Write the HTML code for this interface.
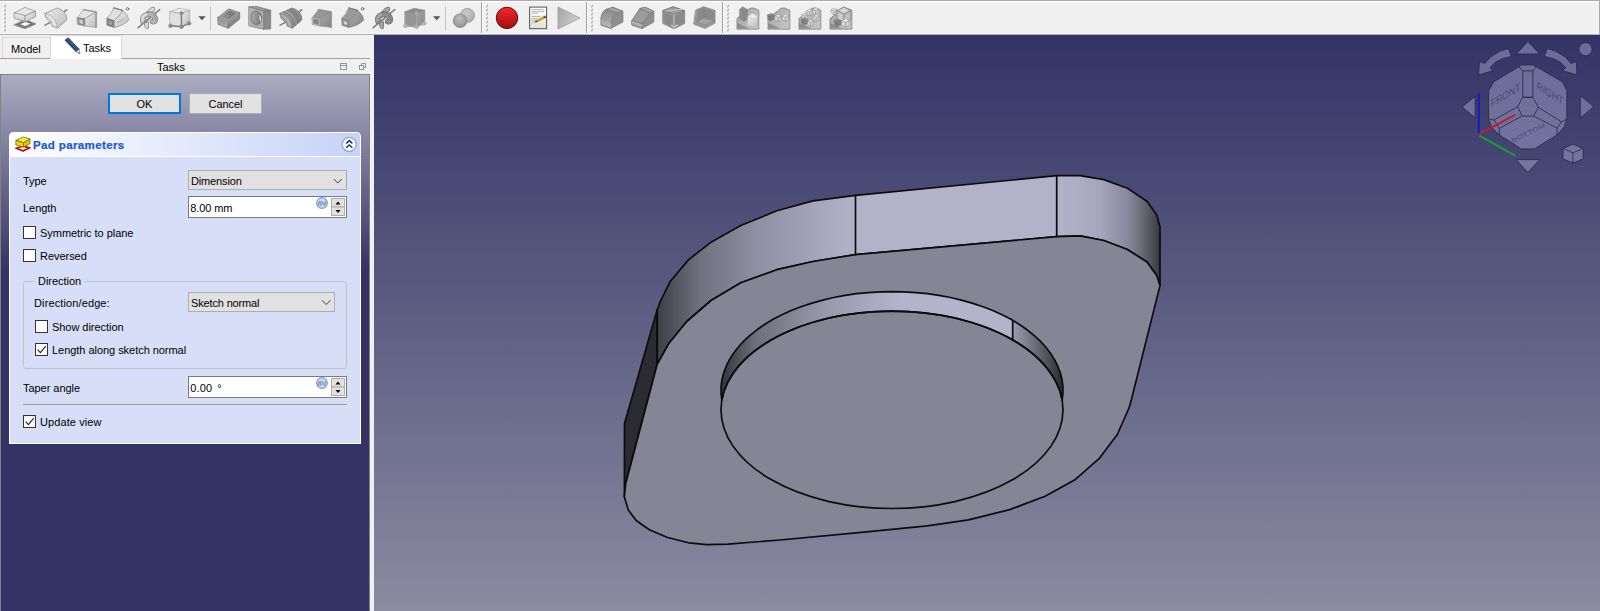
<!DOCTYPE html>
<html>
<head>
<meta charset="utf-8">
<title>FreeCAD</title>
<style>
*{box-sizing:border-box;margin:0;padding:0}
html,body{width:1600px;height:611px;overflow:hidden;background:#f0f0f0}
body{font-family:"Liberation Sans",sans-serif;font-size:11px;color:#000;letter-spacing:-0.04px;position:relative}
.abs{position:absolute}
#topline{left:0;top:0;width:1600px;height:2px;background:linear-gradient(#ababab 0,#ababab 1px,#fff 1px,#fff 2px)}
#toolbar{left:0;top:1px;width:1600px;height:33px;background:#f0f0f0}
#tbline{left:0;top:33px;width:1600px;height:2px;background:linear-gradient(#f8f8f8 0,#f8f8f8 1px,#b0b0b0 1px,#b0b0b0 2px)}
#view{left:374px;top:35px;width:1226px;height:576px;background:linear-gradient(#333366 0%,#8b8ba2 100%)}
#panel{left:0;top:74px;width:370px;height:760px;border:1px solid #828282;border-top:1px solid #828282;background:linear-gradient(#ababc1 0px,#333365 196px,#333365 100%)}
.t{position:absolute;white-space:nowrap;line-height:14px;height:14px}
.btn{position:absolute;background:#e1e1e1;border:1px solid #adadad;text-align:center;line-height:21px}
.cb{position:absolute;width:13px;height:13px;background:#fff;border:1px solid #333}
.combo{position:absolute;background:#e1e1e1;border:1px solid #adadad;height:20px;line-height:20px;padding-left:2px;letter-spacing:-0.15px}
.spin{position:absolute;background:#fff;border:1px solid #7a7a7a;height:22px;line-height:22px;padding-left:1.3px;letter-spacing:-0.1px}
</style>
</head>
<body>
<div class="abs" id="toolbar"></div>
<svg class="abs" style="left:0;top:0" width="1600" height="35" viewBox="0 0 1600 35">
<defs>
<linearGradient id="lg1" x1="0" y1="0" x2="0" y2="1"><stop offset="0" stop-color="#f2f2f2"/><stop offset="1" stop-color="#c4c4c4"/></linearGradient>
<linearGradient id="lg2" x1="0" y1="0" x2="1" y2="1"><stop offset="0" stop-color="#ececec"/><stop offset="1" stop-color="#bdbdbd"/></linearGradient>
<linearGradient id="dg1" x1="0" y1="0" x2="0" y2="1"><stop offset="0" stop-color="#8a8a8a"/><stop offset="1" stop-color="#b4b4b4"/></linearGradient>
<linearGradient id="dg2" x1="0" y1="0" x2="1" y2="1"><stop offset="0" stop-color="#a8a8a8"/><stop offset="1" stop-color="#868686"/></linearGradient>
<linearGradient id="red" x1="0" y1="0" x2="0" y2="1"><stop offset="0" stop-color="#f4282e"/><stop offset="1" stop-color="#a80c0c"/></linearGradient>
<linearGradient id="doc" x1="0" y1="0" x2="0" y2="1"><stop offset="0" stop-color="#ffffff"/><stop offset="1" stop-color="#dfe1d4"/></linearGradient>
<linearGradient id="play" x1="0" y1="0" x2="1" y2="0.4"><stop offset="0" stop-color="#a4a4a4"/><stop offset="1" stop-color="#cfcfcf"/></linearGradient>
<linearGradient id="dg2h" x1="0" y1="0" x2="1" y2="0.3"><stop offset="0" stop-color="#b0b0b0"/><stop offset="1" stop-color="#7c7c7c"/></linearGradient>
<linearGradient id="bs" x1="0" y1="0" x2="1" y2="0.6"><stop offset="0" stop-color="#a4a4a4"/><stop offset="1" stop-color="#c2c2c2"/></linearGradient>
<radialGradient id="sph" cx="0.45" cy="0.35" r="0.7"><stop offset="0" stop-color="#bdbdbd"/><stop offset="1" stop-color="#8e8e8e"/></radialGradient>
<radialGradient id="sph2" cx="0.45" cy="0.35" r="0.7"><stop offset="0" stop-color="#cccccc"/><stop offset="1" stop-color="#a6a6a6"/></radialGradient>

</defs>
<g transform="translate(4,5.5)"><path d="M-1 -0.6h1.6v1.6h-1.6zM-1 3.4h1.6v1.6h-1.6zM-1 7.4h1.6v1.6h-1.6zM-1 11.4h1.6v1.6h-1.6zM-1 15.4h1.6v1.6h-1.6zM-1 19.4h1.6v1.6h-1.6zM-1 23.4h1.6v1.6h-1.6z" fill="#ffffff"/><path d="M0 0.2h1.5v1.5h-1.5zM1 -0.7h1v1h-1zM0 4.2h1.5v1.5h-1.5zM1 3.3h1v1h-1zM0 8.2h1.5v1.5h-1.5zM1 7.3h1v1h-1zM0 12.2h1.5v1.5h-1.5zM1 11.3h1v1h-1zM0 16.2h1.5v1.5h-1.5zM1 15.3h1v1h-1zM0 20.2h1.5v1.5h-1.5zM1 19.3h1v1h-1zM0 24.2h1.5v1.5h-1.5zM1 23.3h1v1h-1z" fill="#a6a6a6"/></g>
<g transform="translate(486,5.5)"><path d="M-1 -0.6h1.6v1.6h-1.6zM-1 3.4h1.6v1.6h-1.6zM-1 7.4h1.6v1.6h-1.6zM-1 11.4h1.6v1.6h-1.6zM-1 15.4h1.6v1.6h-1.6zM-1 19.4h1.6v1.6h-1.6zM-1 23.4h1.6v1.6h-1.6z" fill="#ffffff"/><path d="M0 0.2h1.5v1.5h-1.5zM1 -0.7h1v1h-1zM0 4.2h1.5v1.5h-1.5zM1 3.3h1v1h-1zM0 8.2h1.5v1.5h-1.5zM1 7.3h1v1h-1zM0 12.2h1.5v1.5h-1.5zM1 11.3h1v1h-1zM0 16.2h1.5v1.5h-1.5zM1 15.3h1v1h-1zM0 20.2h1.5v1.5h-1.5zM1 19.3h1v1h-1zM0 24.2h1.5v1.5h-1.5zM1 23.3h1v1h-1z" fill="#a6a6a6"/></g>
<g transform="translate(591,5.5)"><path d="M-1 -0.6h1.6v1.6h-1.6zM-1 3.4h1.6v1.6h-1.6zM-1 7.4h1.6v1.6h-1.6zM-1 11.4h1.6v1.6h-1.6zM-1 15.4h1.6v1.6h-1.6zM-1 19.4h1.6v1.6h-1.6zM-1 23.4h1.6v1.6h-1.6z" fill="#ffffff"/><path d="M0 0.2h1.5v1.5h-1.5zM1 -0.7h1v1h-1zM0 4.2h1.5v1.5h-1.5zM1 3.3h1v1h-1zM0 8.2h1.5v1.5h-1.5zM1 7.3h1v1h-1zM0 12.2h1.5v1.5h-1.5zM1 11.3h1v1h-1zM0 16.2h1.5v1.5h-1.5zM1 15.3h1v1h-1zM0 20.2h1.5v1.5h-1.5zM1 19.3h1v1h-1zM0 24.2h1.5v1.5h-1.5zM1 23.3h1v1h-1z" fill="#a6a6a6"/></g>
<g transform="translate(727,5.5)"><path d="M-1 -0.6h1.6v1.6h-1.6zM-1 3.4h1.6v1.6h-1.6zM-1 7.4h1.6v1.6h-1.6zM-1 11.4h1.6v1.6h-1.6zM-1 15.4h1.6v1.6h-1.6zM-1 19.4h1.6v1.6h-1.6zM-1 23.4h1.6v1.6h-1.6z" fill="#ffffff"/><path d="M0 0.2h1.5v1.5h-1.5zM1 -0.7h1v1h-1zM0 4.2h1.5v1.5h-1.5zM1 3.3h1v1h-1zM0 8.2h1.5v1.5h-1.5zM1 7.3h1v1h-1zM0 12.2h1.5v1.5h-1.5zM1 11.3h1v1h-1zM0 16.2h1.5v1.5h-1.5zM1 15.3h1v1h-1zM0 20.2h1.5v1.5h-1.5zM1 19.3h1v1h-1zM0 24.2h1.5v1.5h-1.5zM1 23.3h1v1h-1z" fill="#a6a6a6"/></g>
<path d="M481.5 1V34" stroke="#a0a0a0" stroke-width="1"/><path d="M482.5 1V34" stroke="#ffffff" stroke-width="1"/>
<path d="M586.5 1V34" stroke="#a0a0a0" stroke-width="1"/><path d="M587.5 1V34" stroke="#ffffff" stroke-width="1"/>
<path d="M722.5 1V34" stroke="#a0a0a0" stroke-width="1"/><path d="M723.5 1V34" stroke="#ffffff" stroke-width="1"/>
<path d="M210.5 6.5V30" stroke="#c4c4c4" stroke-width="1"/>
<path d="M445.5 6.5V30" stroke="#c4c4c4" stroke-width="1"/>
<path d="M198.3 16.3h7.4l-3.7 3.9z" fill="#55555c"/>
<path d="M433 16.3h7.4l-3.7 3.9z" fill="#55555c"/>
<g transform="translate(13,6)" stroke-linejoin="round" stroke-linecap="round"><path d="M1.1 18.9 L12.1 22.7 L23 17.9 L12.4 13.5Z" fill="#6e6e6e" stroke="#7c7c7c" stroke-width="0.6"/>
<path d="M3 18.6 L12.2 21.8 M5 17.6 L14.5 20.8 M7 16.6 L17 19.8 M19 16.2 L10 20.6 M21 17 L12 21.6" stroke="#9a9a9a" stroke-width="0.5" fill="none"/>
<path d="M7.4 18.3 L12.2 20.1 L17.4 17.7 L12.4 15.8Z" fill="#f6f6f6"/>
<path d="M1.4 6.9 L11.9 1.4 L22.5 5.2 L12.4 9.6Z" fill="#e6e6e6" stroke="#8a8a8a" stroke-width="0.7"/>
<path d="M1.4 6.9 L12.4 9.6 L12.4 15.9 L1.6 12.4Z" fill="url(#lg1)" stroke="#8a8a8a" stroke-width="0.7"/>
<path d="M12.4 9.6 L22.5 5.2 L22.5 10.7 L12.4 15.9Z" fill="url(#lg2)" stroke="#8a8a8a" stroke-width="0.7"/></g>
<g transform="translate(44,6)" stroke-linejoin="round" stroke-linecap="round"><path d="M1.1 19.1 L6.8 16.1 M20 5.9 L22.7 3.8" stroke="#808080" stroke-width="1.6" fill="none"/>
<path d="M1.1 7.4 L13.4 2 Q18.5 3.5 21.2 7.4 Q23.2 11 22.7 14 L13.4 22.1 L8 19.7 Q8.2 17.5 7.1 16.7 L3.5 13.7 Q2 12.5 2 11Z" fill="url(#lg2)" stroke="#8e8e8e" stroke-width="0.8"/>
<path d="M1.1 7.4 Q9 9.5 11.5 15 Q13 18.5 13.4 22.1 L8 19.7 Q8.2 17.5 7.1 16.7 L3.5 13.7 Q2 12.5 2 11Z" fill="#e6e6e6" stroke="#8e8e8e" stroke-width="0.6"/>
<path d="M2 11 Q6.5 12 8 16.8" stroke="#8e8e8e" stroke-width="0.5" fill="none"/></g>
<g transform="translate(75,6)" stroke-linejoin="round" stroke-linecap="round"><path d="M8.5 3.3 L21.6 5.7 L21.6 21.5 L20.4 21.8 L20.4 6.6 L8.2 4.4Z" fill="#8c8c8c" stroke="#8e8e8e" stroke-width="0.6"/>
<path d="M2.3 11.5 L8.5 3.9 L20.6 6.2 L9.9 12.6Z" fill="#e4e4e4" stroke="#8e8e8e" stroke-width="0.6"/>
<path d="M9.9 12.6 L20.6 6.2 L20.6 21.3 L9.9 20.1Z" fill="url(#lg2)" stroke="#8e8e8e" stroke-width="0.6"/>
<path d="M2.3 11.5 L9.9 12.6 L9.9 20.1 L2.7 18.4Z" fill="#8c8c8c" stroke="#8e8e8e" stroke-width="0.6"/>
<path d="M4.3 13.6 L7.9 14.2 L7.9 17.9 L4.5 17.2Z" fill="#d0d0d0"/></g>
<g transform="translate(106,6)" stroke-linejoin="round" stroke-linecap="round"><path d="M8.1 14.6 Q14 10 16.7 4.3 Q22 8.5 22.9 13.9 Q17 20 8.1 21.5Z" fill="url(#lg2)" stroke="#868686" stroke-width="0.6"/>
<path d="M0.9 12.2 Q5.5 8 7.7 1.9 L16.7 4.3 Q14 10 8.1 14.6Z" fill="#e0e0e0" stroke="#868686" stroke-width="0.6"/>
<path d="M7.7 1.9 L16.7 4.3" stroke="#808080" stroke-width="1.2" fill="none"/>
<path d="M0.9 12.2 L8.1 14.6 L8.1 21.5 L1.2 19.4Z" fill="#808080" stroke="#868686" stroke-width="0.6"/>
<path d="M2.6 14.8 L6.2 16 L6.2 18.9 L2.8 17.9Z" fill="#a0a0a0"/>
<path d="M11 16.5 Q15 15.5 17.5 13" stroke="#999" stroke-width="0.8" fill="none"/>
<circle cx="21.5" cy="2.9" r="1.3" fill="none" stroke="#666" stroke-width="0.9"/></g>
<g transform="translate(137,6)" stroke-linejoin="round" stroke-linecap="round"><path d="M10.1 5.8 Q12.5 1.2 17 1 Q18.2 2.8 17.6 4.8 Q14 7.5 10.1 5.8Z" fill="#dedede" stroke="#868686" stroke-width="0.9"/>
<path d="M7.2 17.4 L8.3 21.6 Q9.6 23.4 11.2 22.6 L11.6 16.2Z" fill="#dedede" stroke="#868686" stroke-width="0.9"/>
<path d="M1.2 21.7 L22.7 3.6" stroke="#808080" stroke-width="1.6" fill="none"/>
<path d="M6 15.4 Q5 10.4 9.4 8.8 Q16.4 7 18.4 12.6 Q19 16.4 15.6 15.6" stroke="#868686" stroke-width="5.4" fill="none"/>
<path d="M6 15.4 Q5 10.4 9.4 8.8 Q16.4 7 18.4 12.6 Q19 16.4 15.6 15.6" stroke="#b4b4b4" stroke-width="3.9" fill="none"/>
<path d="M5.4 14.4 Q4.8 10.2 9 8.4" stroke="#dedede" stroke-width="2.4" fill="none"/>
<path d="M16.5 9.2 Q19.4 11 19.2 14.6" stroke="#868686" stroke-width="0.7" fill="none"/>
<path d="M7.6 16.4 L12.2 12.6" stroke="#808080" stroke-width="1.6" fill="none"/></g>
<g transform="translate(168,6)" stroke-linejoin="round" stroke-linecap="round"><path d="M2.1 5.7 L11.1 2.3 L21.7 4.3 L13.5 7.4Z" fill="#ebebeb" stroke="#9a9a9a" stroke-width="0.6"/>
<path d="M2.1 5.7 L13.5 7.4 L13.5 20.5 L2.1 19.4Z" fill="#e0e0e0" stroke="#9a9a9a" stroke-width="0.6"/>
<path d="M13.5 7.4 L21.7 4.3 L21.7 17.4 L13.5 20.5Z" fill="url(#lg2)" stroke="#9a9a9a" stroke-width="0.6"/>
<path d="M13.5 7.1 V20.8 M2.5 19.8 L13.5 20.8 L21 17.4" stroke="#808080" stroke-width="1.4" fill="none"/>
<g stroke="#808080" stroke-width="0.5"><circle cx="13.5" cy="7.1" r="1.7" fill="#8c8c8c"/><circle cx="2.5" cy="19.8" r="1.9" fill="#8c8c8c"/><circle cx="13.5" cy="20.8" r="1.9" fill="#8c8c8c"/><circle cx="21" cy="17.4" r="1.9" fill="#8c8c8c"/></g></g>
<g transform="translate(217,6)" stroke-linejoin="round" stroke-linecap="round"><path d="M1.1 11.5 L11.7 2.9 L22.7 6.7 L11.4 16.3Z" fill="#9e9e9e" stroke="#727272" stroke-width="0.8"/>
<path d="M1.1 11.5 L11.4 16.3 L11.4 22.2 L1.4 18.4Z" fill="url(#dg1)" stroke="#727272" stroke-width="0.8"/>
<path d="M11.4 16.3 L22.7 6.7 L22.7 12.9 L11.4 22.2Z" fill="#8a8a8a" stroke="#727272" stroke-width="0.8"/>
<path d="M2.2 12.2 L11.3 16.9 L22 7.6" stroke="#c2c2c2" stroke-width="0.6" fill="none"/>
<path d="M6.6 10.2 L12.4 5.3 L17.9 7.4 L12.1 12.2Z" fill="#7e7e7e" stroke="#6a6a6a" stroke-width="0.7"/>
<path d="M9.6 7.8 L12.6 9 L12.1 12.2 M12.6 9 L17.9 7.4" stroke="#6a6a6a" stroke-width="0.5" fill="none"/>
<path d="M6.6 10.2 L9.6 7.8 L12.6 9 L12.1 12.2Z" fill="#909090"/></g>
<g transform="translate(248,6)" stroke-linejoin="round" stroke-linecap="round"><path d="M1.2 0.9 L8.2 0.3 L22.7 4.3 L15.7 5.3Z" fill="#9c9c9c" stroke="#727272" stroke-width="0.7"/>
<path d="M15.7 5.3 L22.7 4.3 L22.7 22.9 L15.7 23.2Z" fill="#8a8a8a" stroke="#727272" stroke-width="0.7"/>
<path d="M1.2 0.9 L15.7 5.3 L15.7 23.2 L1.2 19.8Z" fill="#adadad" stroke="#727272" stroke-width="0.8"/>
<path d="M2.2 2.2 L14.7 6 L14.7 21.9 L2.2 19Z" fill="none" stroke="#c6c6c6" stroke-width="0.5"/>
<ellipse cx="8.4" cy="11.8" rx="5.4" ry="6.8" fill="url(#dg2h)" stroke="#6e6e6e" stroke-width="0.8" transform="rotate(-5 8.4 11.8)"/>
<path d="M11.4 8.3 Q13.8 11.5 12.6 16.2 Q11.2 12.2 11.4 8.3Z" fill="#fcfcfc"/></g>
<g transform="translate(279,6)" stroke-linejoin="round" stroke-linecap="round"><path d="M1.1 19.1 L6.8 16.1 M20 5.9 L22.7 3.8" stroke="#808080" stroke-width="1.6" fill="none"/>
<path d="M1.1 7.4 L13.4 2 Q18.5 3.5 21.2 7.4 Q23.2 11 22.7 14 L13.4 22.1 L8 19.7 Q8.2 17.5 7.1 16.7 L3.5 13.7 Q2 12.5 2 11Z" fill="url(#dg2)" stroke="#727272" stroke-width="0.8"/>
<path d="M1.1 7.4 Q9 9.5 11.5 15 Q13 18.5 13.4 22.1 L8 19.7 Q8.2 17.5 7.1 16.7 L3.5 13.7 Q2 12.5 2 11Z" fill="#b2b2b2" stroke="#727272" stroke-width="0.6"/>
<path d="M2 11 Q6.5 12 8 16.8" stroke="#727272" stroke-width="0.5" fill="none"/><path d="M5 5.8 Q13.5 9.5 16 19.8 M8.6 4.2 Q17 8 19 17.2" stroke="#7a7a7a" stroke-width="0.9" fill="none"/><path d="M12.5 2.6 Q20 6.5 21.6 15 L19.4 16.9 Q18 8.5 10 3.6Z" fill="#868686" stroke="#727272" stroke-width="0.5"/></g>
<g transform="translate(310,6)" stroke-linejoin="round" stroke-linecap="round"><path d="M8.5 3.3 L21.6 5.7 L21.6 21.5 L20.4 21.8 L20.4 6.6 L8.2 4.4Z" fill="#888888" stroke="#8a8a8a" stroke-width="0.6"/>
<path d="M2.3 11.5 L8.5 3.9 L20.6 6.2 L9.9 12.6Z" fill="#969696" stroke="#8a8a8a" stroke-width="0.6"/>
<path d="M9.9 12.6 L20.6 6.2 L20.6 21.3 L9.9 20.1Z" fill="url(#dg2)" stroke="#8a8a8a" stroke-width="0.6"/>
<path d="M2.3 11.5 L9.9 12.6 L9.9 20.1 L2.7 18.4Z" fill="#888888" stroke="#8a8a8a" stroke-width="0.6"/>
<path d="M2.9 12.2 L9.3 13.2 L9.3 19.4 L3.2 18Z" fill="none" stroke="#c4c4c4" stroke-width="0.8"/><path d="M4.3 13.6 L7.9 14.2 L7.9 17.9 L4.5 17.2Z" fill="#868686"/></g>
<g transform="translate(341,6)" stroke-linejoin="round" stroke-linecap="round"><path d="M8.1 14.6 Q14 10 16.7 4.3 Q22 8.5 22.9 13.9 Q17 20 8.1 21.5Z" fill="url(#dg2)" stroke="#858585" stroke-width="0.6"/>
<path d="M0.9 12.2 Q5.5 8 7.7 1.9 L16.7 4.3 Q14 10 8.1 14.6Z" fill="#9a9a9a" stroke="#858585" stroke-width="0.6"/>
<path d="M7.7 1.9 L16.7 4.3" stroke="#808080" stroke-width="1.2" fill="none"/>
<path d="M0.9 12.2 L8.1 14.6 L8.1 21.5 L1.2 19.4Z" fill="#8a8a8a" stroke="#858585" stroke-width="0.6"/>
<path d="M2.6 14.8 L6.2 16 L6.2 18.9 L2.8 17.9Z" fill="#d0d0d0"/>
<path d="M11 16.5 Q15 15.5 17.5 13" stroke="#999" stroke-width="0.8" fill="none"/>
<circle cx="21.5" cy="2.9" r="1.3" fill="none" stroke="#666" stroke-width="0.9"/></g>
<g transform="translate(372,6)" stroke-linejoin="round" stroke-linecap="round"><path d="M10.1 5.8 Q12.5 1.2 17 1 Q18.2 2.8 17.6 4.8 Q14 7.5 10.1 5.8Z" fill="#a8a8a8" stroke="#707070" stroke-width="0.9"/>
<path d="M7.2 17.4 L8.3 21.6 Q9.6 23.4 11.2 22.6 L11.6 16.2Z" fill="#a8a8a8" stroke="#707070" stroke-width="0.9"/>
<path d="M1.2 21.7 L22.7 3.6" stroke="#808080" stroke-width="1.6" fill="none"/>
<path d="M6 15.4 Q5 10.4 9.4 8.8 Q16.4 7 18.4 12.6 Q19 16.4 15.6 15.6" stroke="#707070" stroke-width="5.4" fill="none"/>
<path d="M6 15.4 Q5 10.4 9.4 8.8 Q16.4 7 18.4 12.6 Q19 16.4 15.6 15.6" stroke="#8e8e8e" stroke-width="3.9" fill="none"/>
<path d="M5.4 14.4 Q4.8 10.2 9 8.4" stroke="#a8a8a8" stroke-width="2.4" fill="none"/>
<path d="M16.5 9.2 Q19.4 11 19.2 14.6" stroke="#707070" stroke-width="0.7" fill="none"/>
<path d="M7.6 16.4 L12.2 12.6" stroke="#808080" stroke-width="1.6" fill="none"/></g>
<g transform="translate(403,6)" stroke-linejoin="round" stroke-linecap="round"><path d="M2.1 5.7 L11.1 2.3 L21.7 4.3 L13.5 7.4Z" fill="#8c8c8c" stroke="#858585" stroke-width="0.6"/>
<path d="M2.1 5.7 L13.5 7.4 L13.5 20.5 L2.1 19.4Z" fill="#969696" stroke="#858585" stroke-width="0.6"/>
<path d="M13.5 7.4 L21.7 4.3 L21.7 17.4 L13.5 20.5Z" fill="url(#dg2)" stroke="#858585" stroke-width="0.6"/>
<path d="M13.5 7.1 V20.8 M2.5 19.8 L13.5 20.8 L21 17.4" stroke="#a0a0a0" stroke-width="1.4" fill="none"/>
<g stroke="#a0a0a0" stroke-width="0.5"><circle cx="13.5" cy="7.1" r="1.7" fill="#b4b4b4"/><circle cx="2.5" cy="19.8" r="1.9" fill="#b4b4b4"/><circle cx="13.5" cy="20.8" r="1.9" fill="#b4b4b4"/><circle cx="21" cy="17.4" r="1.9" fill="#b4b4b4"/></g></g>
<g transform="translate(452,6)" stroke-linejoin="round" stroke-linecap="round"><circle cx="15.4" cy="9.5" r="7.1" fill="url(#sph2)" stroke="#9c9c9c" stroke-width="0.8"/>
<circle cx="8.2" cy="14.7" r="7.5" fill="#e4e4e4"/>
<circle cx="8.2" cy="14.7" r="6.9" fill="url(#sph)" stroke="#8a8a8a" stroke-width="0.8"/></g>
<circle cx="507" cy="17.9" r="10.7" fill="url(#red)" stroke="#3c0808" stroke-width="0.9"/>
<g><rect x="529.6" y="7.1" width="17" height="21.6" fill="url(#doc)" stroke="#50565c" stroke-width="1"/>
<path d="M531.5 9.5h12.5M531.5 11.5h12.5M531.5 13.2h6.5M531.5 16.5h9M531.5 18.6h6M531.5 20.4h4.5M531.5 22.4h3" stroke="#a8a8a8" stroke-width="0.8" fill="none"/>
<path d="M534.9 22.2 L536.4 20.4 L544.3 16.5 L545.6 17.6 L537.6 21.7Z" fill="#e6c012" stroke="#6a5208" stroke-width="0.5"/>
<path d="M543.6 16.8 L545 16 L546 17.2 L544.9 18Z" fill="#d02222" stroke="#701010" stroke-width="0.4"/>
<path d="M534.9 22.2 L536.4 20.4 L537.6 21.7Z" fill="#3a2a10"/></g>
<path d="M558 7 L558 28.9 L580 18Z" fill="url(#play)" stroke="#9c9c9c" stroke-width="0.8" stroke-linejoin="round"/>
<g transform="translate(600,6)" stroke-linejoin="round" stroke-linecap="round"><path d="M1.1 18.8 L1.1 11.8 Q2 5.5 6.3 3.4 L12.8 1.3 L22.9 5.3 L22.9 16 L11.4 22.1Z" fill="#8e8e8e" stroke="#727272" stroke-width="0.7"/>
<path d="M1.1 18.8 L1.1 11.8 Q2 5.5 6.3 3.4 L17.5 7 Q12 9 11.4 15.5 L11.4 22.1Z" fill="url(#dg1)" stroke="#727272" stroke-width="0.6"/>
<path d="M6.3 3.4 L12.8 1.3 L22.9 5.3 L17.5 7Z" fill="#a2a2a2" stroke="#727272" stroke-width="0.6"/>
<path d="M1.3 14.6 L11.3 18.2 M1.3 16.4 L11.3 20" stroke="#bcbcbc" stroke-width="0.7" fill="none"/></g>
<g transform="translate(631,6)" stroke-linejoin="round" stroke-linecap="round"><path d="M1 18.8 L1 14.5 L9 2.5 L14 1.2 L22.8 5.3 L22.8 16 L11.4 22.4Z" fill="#8e8e8e" stroke="#727272" stroke-width="0.7"/>
<path d="M1 14.5 L9 2.5 L19.5 7 L11.4 17.5Z" fill="#9c9c9c" stroke="#727272" stroke-width="0.6"/>
<path d="M9 2.5 L14 1.2 L22.8 5.3 L19.5 7Z" fill="#a6a6a6" stroke="#727272" stroke-width="0.6"/>
<path d="M1 14.5 L11.4 17.5 L11.4 22.4 L1 18.8Z" fill="#a8a8a8" stroke="#727272" stroke-width="0.6"/>
<path d="M1.3 16.4 L11.3 19.6" stroke="#c0c0c0" stroke-width="0.7" fill="none"/></g>
<g transform="translate(662,6)" stroke-linejoin="round" stroke-linecap="round"><path d="M1 4.6 L11 0.8 L22.6 4.6 L22.6 17.5 L12 22.8 L1 17.5Z" fill="#949494" stroke="#727272" stroke-width="0.7"/>
<path d="M1 4.6 L11 0.8 L22.6 4.6 L12 8.2Z" fill="#9e9e9e" stroke="#727272" stroke-width="0.7"/>
<path d="M4 5 L20 3.4" stroke="#c8c8c8" stroke-width="1" fill="none"/>
<path d="M12 8.2 V22.8" stroke="#c8c8c8" stroke-width="0.9" fill="none"/>
<path d="M3.2 8 L10.2 10.2 L10.2 19.5 L3.2 16.4Z M13.8 10.2 L20.6 7.6 L20.6 16.2 L13.8 19.6Z" fill="#8a8a8a" stroke="#808080" stroke-width="0.5"/>
<path d="M9.5 19.2 L11 20.6 M13 20.6 L15.5 19" stroke="#f0f0f0" stroke-width="0.9" fill="none"/></g>
<g transform="translate(693,6)" stroke-linejoin="round" stroke-linecap="round"><path d="M3 4 L10.5 0.8 L22 4.4 L22 17.2 L12 22.4 L1 18.2Z" fill="#989898" stroke="#727272" stroke-width="0.7"/>
<path d="M5.5 5 L10.8 3 L19.8 5.8 L19.8 14.8 L12 18.6 L4.6 15.8Z" fill="#8a8a8a" stroke="#7c7c7c" stroke-width="0.6"/>
<path d="M10.8 3 V12.2 L4.6 15.8 M10.8 12.2 L19.8 14.8" stroke="#7a7a7a" stroke-width="0.6" fill="none"/>
<path d="M4.6 15.8 L10.8 12.2 L19.8 14.8 L12 18.6Z" fill="#a4a4a4"/>
<path d="M1 18.2 L12 22.4 L22 17.2" stroke="#b4b4b4" stroke-width="0.6" fill="none"/></g>
<g transform="translate(736,6)" stroke-linejoin="round" stroke-linecap="round"><path d="M1 22.8 L1 12.6 L14 2.2 L17.6 2 L22.8 4.2 L22.8 22.8Z" fill="#8e8e8e" stroke="#828282" stroke-width="0.8"/>
<path d="M1.4 12.9 L14 2.8 L17.5 2.5 L22.4 4.6 L22.4 22.4 L12.5 22.4 L1.4 17.4Z" fill="url(#bs)"/>
<path d="M1 17.4 L12.5 22.6" stroke="#8a8a8a" stroke-width="0.6" fill="none"/><path d="M3.8 3.5 L6.5 0.8 L11.5 3.6 L11.5 13.2 L8 15.2 L3.8 12.6Z" fill="#8e8e8e" stroke="#7e7e7e" stroke-width="0.6"/>
<path d="M3.8 3.5 L8 6 L8 15.2 M8 6 L11.5 3.6" stroke="#7a7a7a" stroke-width="0.6" fill="none"/>
<path d="M11.6 11.4 V19.6 Q16.5 22 21.6 19.6 V11.4Z" fill="url(#lg2)" stroke="#b0b0b0" stroke-width="0.5"/>
<path d="M11.6 11.4 Q11.6 9.6 16.6 7.6 Q21.6 9.6 21.6 11.4 Q16.6 13.6 11.6 11.4Z" fill="#eeeeee" stroke="#b8b8b8" stroke-width="0.5"/></g>
<g transform="translate(767,6)" stroke-linejoin="round" stroke-linecap="round"><path d="M1 22.8 L1 12.6 L14 2.2 L17.6 2 L22.8 4.2 L22.8 22.8Z" fill="#8e8e8e" stroke="#828282" stroke-width="0.8"/>
<path d="M1.4 12.9 L14 2.8 L17.5 2.5 L22.4 4.6 L22.4 22.4 L12.5 22.4 L1.4 17.4Z" fill="url(#bs)"/>
<path d="M1 17.4 L12.5 22.6" stroke="#8a8a8a" stroke-width="0.6" fill="none"/><g transform="translate(0.8,7.4) scale(1.05)"><path d="M0 1.6 L3 0 L6 1.6 L3 3.2Z" fill="#8a8a8a" stroke="#707070" stroke-width="0.5"/><path d="M0 1.6 L3 3.2 V7 L0 5.4Z" fill="#7c7c7c" stroke="#707070" stroke-width="0.5"/><path d="M3 3.2 L6 1.6 V5.4 L3 7Z" fill="#868686" stroke="#707070" stroke-width="0.5"/></g><g transform="translate(8,8.2) scale(1.05)"><path d="M0 1.6 L3 0 L6 1.6 L3 3.2Z" fill="#e6e6e6" stroke="#909090" stroke-width="0.5"/><path d="M0 1.6 L3 3.2 V7 L0 5.4Z" fill="#dadada" stroke="#909090" stroke-width="0.5"/><path d="M3 3.2 L6 1.6 V5.4 L3 7Z" fill="#cccccc" stroke="#909090" stroke-width="0.5"/></g><g transform="translate(15.4,8.2) scale(1.05)"><path d="M0 1.6 L3 0 L6 1.6 L3 3.2Z" fill="#e6e6e6" stroke="#909090" stroke-width="0.5"/><path d="M0 1.6 L3 3.2 V7 L0 5.4Z" fill="#dadada" stroke="#909090" stroke-width="0.5"/><path d="M3 3.2 L6 1.6 V5.4 L3 7Z" fill="#cccccc" stroke="#909090" stroke-width="0.5"/></g></g>
<g transform="translate(798,6)" stroke-linejoin="round" stroke-linecap="round"><path d="M1 22.8 L1 12.6 L14 2.2 L17.6 2 L22.8 4.2 L22.8 22.8Z" fill="#8e8e8e" stroke="#828282" stroke-width="0.8"/>
<path d="M1.4 12.9 L14 2.8 L17.5 2.5 L22.4 4.6 L22.4 22.4 L12.5 22.4 L1.4 17.4Z" fill="url(#bs)"/>
<path d="M1 17.4 L12.5 22.6" stroke="#8a8a8a" stroke-width="0.6" fill="none"/><g transform="translate(9,3) scale(0.95)"><path d="M0 1.6 L3 0 L6 1.6 L3 3.2Z" fill="#e6e6e6" stroke="#909090" stroke-width="0.5"/><path d="M0 1.6 L3 3.2 V7 L0 5.4Z" fill="#dadada" stroke="#909090" stroke-width="0.5"/><path d="M3 3.2 L6 1.6 V5.4 L3 7Z" fill="#cccccc" stroke="#909090" stroke-width="0.5"/></g><g transform="translate(15,1.6) scale(0.95)"><path d="M0 1.6 L3 0 L6 1.6 L3 3.2Z" fill="#e6e6e6" stroke="#909090" stroke-width="0.5"/><path d="M0 1.6 L3 3.2 V7 L0 5.4Z" fill="#dadada" stroke="#909090" stroke-width="0.5"/><path d="M3 3.2 L6 1.6 V5.4 L3 7Z" fill="#cccccc" stroke="#909090" stroke-width="0.5"/></g><g transform="translate(4,7) scale(0.95)"><path d="M0 1.6 L3 0 L6 1.6 L3 3.2Z" fill="#e0e0e0" stroke="#909090" stroke-width="0.5"/><path d="M0 1.6 L3 3.2 V7 L0 5.4Z" fill="#d4d4d4" stroke="#909090" stroke-width="0.5"/><path d="M3 3.2 L6 1.6 V5.4 L3 7Z" fill="#c8c8c8" stroke="#909090" stroke-width="0.5"/></g><g transform="translate(15.5,8.5) scale(0.95)"><path d="M0 1.6 L3 0 L6 1.6 L3 3.2Z" fill="#e6e6e6" stroke="#909090" stroke-width="0.5"/><path d="M0 1.6 L3 3.2 V7 L0 5.4Z" fill="#dadada" stroke="#909090" stroke-width="0.5"/><path d="M3 3.2 L6 1.6 V5.4 L3 7Z" fill="#cccccc" stroke="#909090" stroke-width="0.5"/></g><g transform="translate(3.6,12) scale(0.95)"><path d="M0 1.6 L3 0 L6 1.6 L3 3.2Z" fill="#8a8a8a" stroke="#707070" stroke-width="0.5"/><path d="M0 1.6 L3 3.2 V7 L0 5.4Z" fill="#7c7c7c" stroke="#707070" stroke-width="0.5"/><path d="M3 3.2 L6 1.6 V5.4 L3 7Z" fill="#868686" stroke="#707070" stroke-width="0.5"/></g><g transform="translate(10,13.5) scale(0.95)"><path d="M0 1.6 L3 0 L6 1.6 L3 3.2Z" fill="#e6e6e6" stroke="#909090" stroke-width="0.5"/><path d="M0 1.6 L3 3.2 V7 L0 5.4Z" fill="#dadada" stroke="#909090" stroke-width="0.5"/><path d="M3 3.2 L6 1.6 V5.4 L3 7Z" fill="#cccccc" stroke="#909090" stroke-width="0.5"/></g></g>
<g transform="translate(829,6)" stroke-linejoin="round" stroke-linecap="round"><path d="M1 22.8 L1 12.6 L14 2.2 L17.6 2 L22.8 4.2 L22.8 22.8Z" fill="#8e8e8e" stroke="#828282" stroke-width="0.8"/>
<path d="M1.4 12.9 L14 2.8 L17.5 2.5 L22.4 4.6 L22.4 22.4 L12.5 22.4 L1.4 17.4Z" fill="url(#bs)"/>
<path d="M1 17.4 L12.5 22.6" stroke="#8a8a8a" stroke-width="0.6" fill="none"/><g transform="translate(2.4,2.2) scale(0.95)"><path d="M0 1.6 L3 0 L6 1.6 L3 3.2Z" fill="#e4e4e4" stroke="#909090" stroke-width="0.5"/><path d="M0 1.6 L3 3.2 V7 L0 5.4Z" fill="#d8d8d8" stroke="#909090" stroke-width="0.5"/><path d="M3 3.2 L6 1.6 V5.4 L3 7Z" fill="#cacaca" stroke="#909090" stroke-width="0.5"/></g><g transform="translate(8,1) scale(2.3)"><path d="M0 1.6 L3 0 L6 1.6 L3 3.2Z" fill="#d8d8d8" stroke="#949494" stroke-width="0.5"/><path d="M0 1.6 L3 3.2 V7 L0 5.4Z" fill="#cccccc" stroke="#949494" stroke-width="0.5"/><path d="M3 3.2 L6 1.6 V5.4 L3 7Z" fill="#c0c0c0" stroke="#949494" stroke-width="0.5"/></g><g transform="translate(5.6,13) scale(1.05)"><path d="M0 1.6 L3 0 L6 1.6 L3 3.2Z" fill="#8a8a8a" stroke="#707070" stroke-width="0.5"/><path d="M0 1.6 L3 3.2 V7 L0 5.4Z" fill="#7c7c7c" stroke="#707070" stroke-width="0.5"/><path d="M3 3.2 L6 1.6 V5.4 L3 7Z" fill="#868686" stroke="#707070" stroke-width="0.5"/></g><g transform="translate(13,12.6) scale(1.25)"><path d="M0 1.6 L3 0 L6 1.6 L3 3.2Z" fill="#eaeaea" stroke="#989898" stroke-width="0.5"/><path d="M0 1.6 L3 3.2 V7 L0 5.4Z" fill="#dedede" stroke="#989898" stroke-width="0.5"/><path d="M3 3.2 L6 1.6 V5.4 L3 7Z" fill="#d2d2d2" stroke="#989898" stroke-width="0.5"/></g></g>
</svg>
<div class="abs" id="topline"></div>
<div class="abs" id="tbline"></div>
<div class="abs" style="left:1599px;top:0;width:1px;height:35px;background:#ababab"></div>

<!-- tabs -->
<div class="abs" style="left:0;top:58px;width:370px;height:1px;background:#a0a0a0"></div>
<div class="abs" style="left:2px;top:37px;width:49px;height:21px;background:#f0f0f0;border:1px solid #d9d9d9;border-bottom:none"></div>
<div class="abs" style="left:50px;top:35px;width:72px;height:24px;background:#fff;border:1px solid #d9d9d9;border-bottom:none"></div>
<div class="t" style="left:11px;top:42px">Model</div>
<div class="t" style="left:83px;top:41px">Tasks</div>
<svg class="abs" style="left:62px;top:36px" width="20" height="20" viewBox="62 36 20 20">
<path d="M65 40.2 L68.2 37.8 L79.2 49.2 L76.2 51.8 Z" fill="#1f4273" stroke="#16305a" stroke-width="0.8"/>
<path d="M66.5 39.2 L77.6 50.6 M67.8 38.4 L78.6 49.8" stroke="#4f78b4" stroke-width="0.7" fill="none"/>
<path d="M76.2 51.8 L79.2 49.2 L80 53.6 Z" fill="#f4f4f4" stroke="#555" stroke-width="0.5"/>
<path d="M78.8 52.2 L80 53.6 L78.2 53.2 Z" fill="#222"/>
</svg>
<div class="t" style="left:157px;top:60px">Tasks</div>
<svg class="abs" style="left:338px;top:61px" width="32" height="12" viewBox="338 61 32 12" fill="none" stroke="#969696" stroke-width="1">
<rect x="340.5" y="63.5" width="6" height="6"/><path d="M340.5 65.5h6"/>
<rect x="359.5" y="65.5" width="4" height="4"/><path d="M361.5 65.5v-2h4v4h-2"/>
</svg>
<div class="abs" id="panel"></div>

<div class="btn" style="left:108px;top:93px;width:73px;height:21px;border:2px solid #0078d7;line-height:19px">OK</div>
<div class="btn" style="left:189px;top:93px;width:73px;height:21px">Cancel</div>

<!-- Pad parameters box -->
<div class="abs" id="hdr" style="left:9px;top:132px;width:352px;height:25px;border-radius:4px 4px 0 0;border:1px solid #fff;background:linear-gradient(90deg,#ffffff 0%,#c6d3f7 100%)"></div>
<div class="abs" id="box" style="left:9px;top:157px;width:352px;height:287px;background:#d6dff7;border:1px solid #fff;border-top:none"></div>
<div class="t" style="left:33px;top:137.6px;font-weight:bold;font-size:11.5px;color:#1f5ad0;letter-spacing:0.38px;-webkit-text-stroke:0.25px #1f5ad0">Pad parameters</div>

<div class="t" style="left:23px;top:174px">Type</div>
<div class="combo" style="left:188px;top:170px;width:159px">Dimension</div>
<div class="t" style="left:23px;top:201px">Length</div>
<div class="spin" style="left:188px;top:196px;width:159px">8.00 mm</div>
<div class="cb" style="left:23px;top:226px"></div>
<div class="t" style="left:40px;top:226px">Symmetric to plane</div>
<div class="cb" style="left:23px;top:249px"></div>
<div class="t" style="left:40px;top:249px">Reversed</div>

<div class="abs" style="left:23px;top:281px;width:324px;height:88px;border:1px solid #c2c3c8;border-radius:3px"></div>
<div class="t" style="left:34px;top:274px;background:#d6dff7;padding:0 4px">Direction</div>
<div class="t" style="left:34px;top:296px;letter-spacing:0.12px">Direction/edge:</div>
<div class="combo" style="left:188px;top:292px;width:147px">Sketch normal</div>
<div class="cb" style="left:35px;top:320px"></div>
<div class="t" style="left:52px;top:320px">Show direction</div>
<div class="cb" style="left:35px;top:343px"></div>
<div class="t" style="left:52px;top:343px">Length along sketch normal</div>

<div class="t" style="left:23px;top:381px">Taper angle</div>
<div class="spin" style="left:188px;top:376px;width:159px;word-spacing:2px;letter-spacing:0.1px">0.00 °</div>
<div class="abs" style="left:23px;top:404px;width:324px;height:1px;background:#a0a0a0"></div>
<div class="cb" style="left:23px;top:415px"></div>
<div class="t" style="left:40px;top:415px;letter-spacing:0.1px">Update view</div>


<!-- panel icons -->
<svg class="abs" style="left:0;top:130px" width="370" height="320" viewBox="0 130 370 320">
<!-- pad icon -->
<g stroke-linejoin="round">
<path d="M16 148.3 L23 146.2 L30 147.8 L23 150.9 Z" fill="#fff" stroke="#b81414" stroke-width="1.7"/>
<path d="M15.9 140.4 L23.3 137 L30 139 L23.5 142.8 Z" fill="#f7ea3a" stroke="#7a6c08" stroke-width="0.8"/>
<path d="M15.9 140.4 L23.5 142.8 L23.5 147 L15.9 145 Z" fill="#e6d81e" stroke="#7a6c08" stroke-width="0.8"/>
<path d="M23.5 142.8 L30 139 L30 143.6 L23.5 147 Z" fill="#d9c90e" stroke="#7a6c08" stroke-width="0.8"/>
</g>
<!-- collapse button -->
<circle cx="349.2" cy="144.4" r="7" fill="#fff" stroke="#a6abcf" stroke-width="1.5"/>
<path d="M346.2 143.4 L349.3 140.6 L352.4 143.4 M346.2 147.8 L349.3 145 L352.4 147.8" fill="none" stroke="#0a3aa0" stroke-width="1.5"/>
<!-- combo chevrons -->
<path d="M333.8 179 L337.8 183 L341.8 179" fill="none" stroke="#3c3c3c" stroke-width="1"/>
<path d="M322 300.3 L326.2 304.5 L330.4 300.3" fill="none" stroke="#3c3c3c" stroke-width="1"/>
<!-- spin buttons -->
<g fill="#e1e1e1" stroke="#adadad" stroke-width="1">
<rect x="331.5" y="198.5" width="13" height="8.5"/><rect x="331.5" y="207" width="13" height="8.5"/>
<rect x="331.5" y="378.5" width="13" height="8.5"/><rect x="331.5" y="387" width="13" height="8.5"/>
</g>
<g fill="#000">
<path d="M335.5 204.5 L338 201.5 L340.5 204.5 Z"/><path d="M335.5 210 L338 213 L340.5 210 Z"/>
<path d="M335.5 384.5 L338 381.5 L340.5 384.5 Z"/><path d="M335.5 390 L338 393 L340.5 390 Z"/>
</g>
<!-- f(x) icons -->
<g font-family="Liberation Serif, serif" font-style="italic" font-size="6.5" font-weight="bold" text-anchor="middle" letter-spacing="-0.4">
<circle cx="322" cy="203" r="5.4" fill="#cbd7ea" stroke="#7f9bc8" stroke-width="1.1"/>
<text x="321.8" y="205.2" fill="#5d7fb6">f(x)</text>
<circle cx="322" cy="383" r="5.4" fill="#cbd7ea" stroke="#7f9bc8" stroke-width="1.1"/>
<text x="321.8" y="385.2" fill="#5d7fb6">f(x)</text>
</g>
<!-- check marks -->
<path d="M37.6 349.6 L40.4 352.6 L45.8 346.2" fill="none" stroke="#222" stroke-width="1.1"/>
<path d="M25.6 421.6 L28.4 424.6 L33.8 418.2" fill="none" stroke="#222" stroke-width="1.1"/>
</svg>
<div class="abs" style="left:370px;top:35px;width:4px;height:576px;background:#f0f0f0"></div>
<div class="abs" id="view"></div>
<svg class="abs" style="left:374px;top:35px" width="1226" height="576" viewBox="374 35 1226 576">
<defs>
<linearGradient id="gw" gradientUnits="userSpaceOnUse" x1="657" y1="0" x2="1160" y2="0">
<stop offset="0" stop-color="#3e3e46"/><stop offset="0.085" stop-color="#70707f"/><stop offset="0.2" stop-color="#9090a4"/><stop offset="0.394" stop-color="#b2b2c9"/><stop offset="0.795" stop-color="#b2b2c9"/><stop offset="0.88" stop-color="#a6a6bc"/><stop offset="0.94" stop-color="#86869a"/><stop offset="0.98" stop-color="#56565f"/><stop offset="1" stop-color="#38383e"/>
</linearGradient>
<linearGradient id="gh" gradientUnits="userSpaceOnUse" x1="721" y1="0" x2="1063" y2="0">
<stop offset="0" stop-color="#34343a"/><stop offset="0.1" stop-color="#6e6e7c"/><stop offset="0.3" stop-color="#9898ac"/><stop offset="0.52" stop-color="#b3b3ca"/><stop offset="0.852" stop-color="#b3b3ca"/><stop offset="0.853" stop-color="#9c9cb0"/><stop offset="0.95" stop-color="#55555f"/><stop offset="1" stop-color="#28282c"/>
</linearGradient>
</defs>
<g stroke="#0c0c0c" stroke-width="1.7" stroke-linejoin="round" stroke-linecap="round">
<polygon points="657.2,309.8 624.5,423.4 624.4,497.0 625.6,484.0 657.2,364.4" fill="#2b2b31"/>
<polygon points="657.2,309.8 660.6,300.8 670.4,281.2 688.4,259.9 711.4,241.9 740.8,225.5 776.9,210.8 812.9,200.9 855.5,195.4 1056.7,175.7 1080.2,175.7 1103.8,179.6 1127.4,188.3 1147.0,201.2 1156.8,215.0 1160.0,226.7 1160.0,285.6 1156.8,275.8 1147.0,262.0 1127.4,249.5 1103.8,240.5 1080.2,235.8 1056.7,236.6 855.5,254.6 813.0,261.5 776.9,269.7 740.8,282.8 711.0,300.5 686.8,321.5 668.8,343.5 657.2,364.4" fill="url(#gw)"/>
<polygon points="657.2,364.4 668.8,343.5 686.8,321.5 711.0,300.5 740.8,282.8 776.9,269.7 813.0,261.5 855.5,254.6 1056.7,236.6 1080.2,235.8 1103.8,240.5 1127.4,249.5 1147.0,262.0 1156.8,275.8 1160.0,285.6 1131.3,400.0 1129.0,408.0 1117.3,434.5 1099.6,458.1 1074.5,480.1 1045.1,496.3 1009.7,509.6 968.5,519.9 927.3,525.8 853.6,533.2 780.0,540.0 727.9,544.1 706.9,544.6 688.6,542.8 667.6,537.5 649.3,529.7 636.2,520.5 628.3,510.0 624.4,497.0 625.6,484.0" fill="#858596"/>
<polygon points="721.8,400.1 721.1,393.2 721.1,386.3 722.0,379.5 723.7,372.7 726.3,366.0 729.6,359.4 733.7,353.0 738.6,346.7 744.2,340.6 750.6,334.8 757.6,329.3 765.3,324.0 773.5,319.1 782.4,314.5 791.8,310.3 801.7,306.5 812.0,303.1 822.7,300.1 833.7,297.5 845.0,295.4 856.6,293.7 868.3,292.6 880.1,291.8 892.0,291.6 903.9,291.8 915.7,292.6 927.4,293.7 939.0,295.4 950.3,297.5 961.3,300.1 972.0,303.1 982.3,306.5 992.2,310.3 1001.6,314.5 1010.5,319.1 1018.7,324.0 1026.4,329.3 1033.4,334.8 1039.8,340.6 1045.4,346.7 1050.3,353.0 1054.4,359.4 1057.7,366.0 1060.3,372.7 1062.0,379.5 1062.9,386.3 1062.9,393.2 1062.2,400.0 1062.2,400.1 1060.8,394.0 1058.8,388.1 1056.2,382.2 1053.0,376.5 1049.1,370.9 1044.7,365.4 1039.7,360.1 1034.1,354.9 1028.0,350.0 1021.4,345.3 1014.3,340.8 1006.8,336.6 998.8,332.7 990.4,329.1 981.7,325.8 972.6,322.7 963.2,320.1 953.5,317.7 943.6,315.7 933.5,314.1 923.3,312.8 912.9,311.8 902.5,311.3 892.0,311.1 881.5,311.3 871.1,311.8 860.7,312.8 850.5,314.1 840.4,315.7 830.5,317.7 820.8,320.1 811.4,322.7 802.3,325.8 793.6,329.1 785.2,332.7 777.2,336.6 769.7,340.8 762.6,345.3 756.0,350.0 749.9,354.9 744.3,360.1 739.3,365.4 734.9,370.9 731.0,376.5 727.8,382.2 725.2,388.1 723.2,394.0 721.8,400.1" fill="url(#gh)"/>
<ellipse cx="892" cy="409.8" rx="171" ry="98.7" fill="none"/>
<path d="M855.5 195.4V254.6M1056.7 175.7V236.6M657.2 309.8V364.4M1012.7 320.5V340.6" fill="none"/>
</g>
</svg>
<svg class="abs" style="left:1455px;top:35px" width="145" height="145" viewBox="1455 35 145 145">
<g fill="#a8a8d2" fill-opacity="0.48" stroke="#26263e" stroke-width="0.8" stroke-linejoin="round">
<polygon points="1521.7,65.0 1533.2,65.0 1562.4,81.8 1566.8,90.3 1566.8,119.1 1564.0,127.2 1557.0,134.9 1534.4,148.9 1521.2,148.9 1499.4,134.9 1491.7,127.2 1488.6,119.1 1488.6,91.1 1493.7,81.8"/>
<polygon points="1516.2,54.0 1539.7,54.0 1527.9,41.4"/>
<polygon points="1516.2,159.6 1539.7,159.6 1527.9,172.6"/>
<polygon points="1475.2,96.2 1475.2,118.1 1462.1,106.9"/>
<polygon points="1580.3,95.5 1580.3,118.1 1593.8,106.7"/>
<polygon points="1508.4,48.5 1500.1,51.1 1490.6,56.8 1484.7,63.5 1479.4,61.6 1478.7,74.9 1493.4,70.6 1489.9,67.7 1495.3,62.3 1502.5,58.7 1511.5,56.4"/><polygon points="1547.3,48.5 1555.6,51.1 1565.1,56.8 1571.0,63.5 1576.3,61.6 1577.0,74.9 1562.3,70.6 1565.8,67.7 1560.4,62.3 1553.2,58.7 1544.2,56.4"/>
<circle cx="1585.5" cy="49.2" r="6.6"/>
<polygon points="1563.0,148.4 1572.9,144.2 1583.1,148.4 1583.1,158.9 1572.9,163.1 1563.0,158.9"/>
</g>
<g fill="none" stroke="#26263e" stroke-width="0.8" stroke-linejoin="round">
<polygon points="1522.8,70.9 1532.9,70.9 1532.9,97.3 1522.8,97.3"/><polygon points="1522.8,97.3 1532.9,97.3 1538.3,107.4 1533.6,116.0 1522.0,116.0 1517.8,106.6"/>
<polyline points="1522.8,70.9 1518.9,66.8"/>
<polyline points="1532.9,70.9 1536.3,66.8"/>
<polyline points="1517.8,106.6 1494.0,119.9"/>
<polyline points="1522.0,116.0 1499.4,128.4"/>
<polyline points="1488.6,119.1 1494.0,119.9 1499.4,128.4 1499.4,134.9"/>
<polyline points="1538.3,107.4 1561.6,121.9"/>
<polyline points="1533.6,116.0 1557.0,128.1"/>
<polyline points="1566.8,119.1 1561.6,121.9 1557.0,128.1 1557.0,134.9"/>
<polyline points="1572.9,152.9 1563.0,148.4"/>
<polyline points="1572.9,152.9 1583.1,148.4"/>
<polyline points="1572.9,152.9 1572.9,163.1"/>
</g>
<g font-family="Liberation Sans, sans-serif" fill="#2e2e4c" fill-opacity="0.6" text-anchor="middle" letter-spacing="0">
<text transform="matrix(0.83,-0.5,0.1,1,1505.6,95.2)" font-size="10.4" y="3.6">FRONT</text>
<text transform="matrix(0.83,0.5,-0.1,1,1550,93.3)" font-size="10.4" y="3.6">RIGHT</text>
<text transform="matrix(0.9,-0.45,0.35,0.62,1528.3,132.8)" font-size="8.6" y="3">BOTTOM</text>
</g>
<g stroke-width="2" stroke-linecap="butt" fill="none">
<path d="M1478.8 93 V133.8" stroke="#1a1ac4"/>
<path d="M1478.9 134.3 L1515 114.8" stroke="#c41a30"/>
<path d="M1479.4 135.6 L1515 155.6" stroke="#1aa030"/>
</g></svg>
</body>
</html>
